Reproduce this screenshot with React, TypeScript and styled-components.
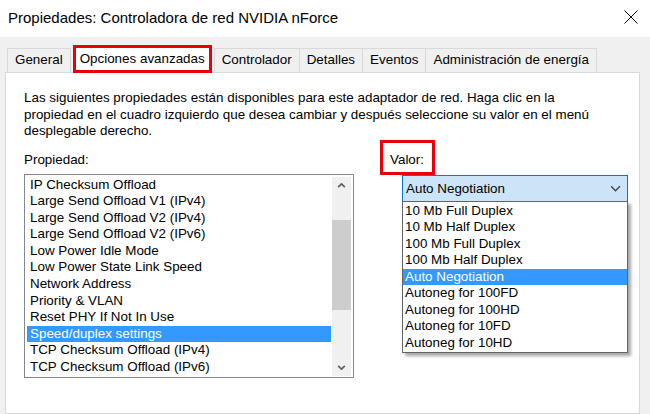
import React from 'react';
import styled, { createGlobalStyle } from 'styled-components';

const Global = createGlobalStyle`
  html, body { margin: 0; padding: 0; background: #f0f0f0; }
  body {
    font-family: "Liberation Sans", Arial, sans-serif;
    font-size: 13.4px;
    color: #000;
  }
  * { box-sizing: border-box; }
`;

const Window = styled.div`
  width: 650px;
  height: 414px;
  overflow: hidden;
  display: flex;
  flex-direction: column;
  background: #f0f0f0;
`;

const TitleBar = styled.div`
  height: 37px;
  flex-shrink: 0;
  background: #fff;
  display: flex;
  align-items: center;
  justify-content: space-between;
  padding: 0 12px 3px 8px;
`;

const Title = styled.div`
  font-size: 15px;
  color: #000;
`;

const CloseButton = styled.div`
  width: 14px;
  height: 14px;
  display: flex;
  align-items: center;
  justify-content: center;
`;

const Body = styled.div`
  flex: 1;
  display: flex;
  flex-direction: column;
  padding: 8px 10px 0 5px;
`;

const TabStrip = styled.div`
  display: flex;
  align-items: flex-end;
  height: 27px;
  padding-left: 2px;
  position: relative;
  z-index: 1;
`;

const Tab = styled.div<{ $active?: boolean }>`
  height: ${p => (p.$active ? '28px' : '24px')};
  margin: ${p => (p.$active ? '0 3px -1px 2px' : '0 0 0 -1px')};
  padding: ${p => (p.$active ? '3px 4px 0' : '3px 7px 0')};
  background: ${p => (p.$active ? '#fff' : '#f0f0f0')};
  border: ${p => (p.$active ? '3px solid #e8000b' : '1px solid #d9d9d9')};
  border-bottom: ${p => (p.$active ? '3px solid #e8000b' : 'none')};
  white-space: nowrap;
  line-height: 16px;
  &:first-child { margin-left: 0; }
`;

const Panel = styled.div`
  flex: 1;
  background: #fff;
  border: 1px solid #d9d9d9;
  padding: 17px 0 0 18px;
`;

const Description = styled.p`
  margin: 0;
  line-height: 16.5px;
  white-space: nowrap;
`;

const Columns = styled.div`
  display: flex;
  gap: 26px;
  align-items: flex-start;
`;

const LeftColumn = styled.div`
  width: 330px;
  flex-shrink: 0;
  display: flex;
  flex-direction: column;
`;

const FieldLabel = styled.div`
  line-height: 16.5px;
  margin: 12.5px 0 5px;
`;

const ListBox = styled.div`
  height: 204px;
  border: 1px solid #828790;
  padding: 2px 2px 1px;
  display: flex;
  background: #fff;
`;

const Items = styled.div`
  flex: 1;
  display: flex;
  flex-direction: column;
  overflow: hidden;
`;

const Item = styled.div<{ $selected?: boolean }>`
  flex-shrink: 0;
  height: 16.6px;
  line-height: 16.6px;
  padding-left: 3px;
  white-space: nowrap;
  background: ${p => (p.$selected ? '#3399ff' : 'transparent')};
  color: ${p => (p.$selected ? '#fff' : '#000')};
`;

const ScrollBar = styled.div`
  width: 19px;
  margin-left: 1px;
  background: #f0f0f0;
  display: flex;
  flex-direction: column;
`;

const ScrollArrow = styled.div`
  height: 17px;
  display: flex;
  align-items: center;
  justify-content: center;
`;

const ScrollTrack = styled.div`
  flex: 1;
  padding-top: 26px;
`;

const Thumb = styled.div`
  height: 90px;
  background: #cdcdcd;
`;

const RightColumn = styled.div`
  flex-shrink: 0;
  display: flex;
  flex-direction: column;
  align-items: flex-start;
`;

const ValorBox = styled.div`
  width: 55px;
  height: 35px;
  border: 3px solid #e8000b;
  padding: 9.5px 0 0 7px;
  line-height: 16.5px;
`;

const ComboWrap = styled.div`
  position: relative;
  margin-left: 22px;
`;

const Combo = styled.div`
  width: 226px;
  height: 27px;
  background: #cce4f7;
  border: 1px solid #0078d7;
  display: flex;
  align-items: center;
  justify-content: space-between;
  padding: 0 6px 0 3px;
`;

const DropList = styled.div`
  position: absolute;
  left: 0;
  top: 26px;
  width: 226px;
  background: #fff;
  border: 1px solid #646464;
  padding: 1px 0 1px;
  box-shadow: 3px 3px 3px rgba(0, 0, 0, 0.35);
  z-index: 2;
`;

const DropItem = styled.div<{ $selected?: boolean }>`
  height: 16.5px;
  line-height: 16.5px;
  padding-left: 2px;
  white-space: nowrap;
  background: ${p => (p.$selected ? '#3399ff' : 'transparent')};
  color: ${p => (p.$selected ? '#fff' : '#000')};
`;

const Chevron = ({ up, w = 9, color = '#606060', sw = 2 }: { up?: boolean; w?: number; color?: string; sw?: number }) => (
  <svg width={w} height={Math.round(w * 0.6)} viewBox="0 0 10 6">
    <polyline
      points={up ? '1,5 5,1 9,5' : '1,1 5,5 9,1'}
      fill="none"
      stroke={color}
      strokeWidth={sw}
    />
  </svg>
);

const properties = [
  'IP Checksum Offload',
  'Large Send Offload V1 (IPv4)',
  'Large Send Offload V2 (IPv4)',
  'Large Send Offload V2 (IPv6)',
  'Low Power Idle Mode',
  'Low Power State Link Speed',
  'Network Address',
  'Priority & VLAN',
  'Reset PHY If Not In Use',
  'Speed/duplex settings',
  'TCP Checksum Offload (IPv4)',
  'TCP Checksum Offload (IPv6)',
];

const values = [
  '10 Mb Full Duplex',
  '10 Mb Half Duplex',
  '100 Mb Full Duplex',
  '100 Mb Half Duplex',
  'Auto Negotiation',
  'Autoneg for 100FD',
  'Autoneg for 100HD',
  'Autoneg for 10FD',
  'Autoneg for 10HD',
];

const tabs = ['General', 'Opciones avanzadas', 'Controlador', 'Detalles', 'Eventos', 'Administración de energía'];

export default function App() {
  return (
    <Window>
      <Global />
      <TitleBar>
        <Title>Propiedades: Controladora de red NVIDIA nForce</Title>
        <CloseButton>
          <svg width="14" height="14" viewBox="0 0 14 14">
            <path d="M0.5 0.5 L13.5 13.5 M13.5 0.5 L0.5 13.5" stroke="#000" strokeWidth="1" />
          </svg>
        </CloseButton>
      </TitleBar>
      <Body>
        <TabStrip>
          {tabs.map(t => (
            <Tab key={t} $active={t === 'Opciones avanzadas'}>
              {t}
            </Tab>
          ))}
        </TabStrip>
        <Panel>
          <Description>
            Las siguientes propiedades están disponibles para este adaptador de red. Haga clic en la
            <br />
            propiedad en el cuadro izquierdo que desea cambiar y después seleccione su valor en el menú
            <br />
            desplegable derecho.
          </Description>
          <Columns>
            <LeftColumn>
              <FieldLabel>Propiedad:</FieldLabel>
              <ListBox>
                <Items>
                  {properties.map(p => (
                    <Item key={p} $selected={p === 'Speed/duplex settings'}>
                      {p}
                    </Item>
                  ))}
                </Items>
                <ScrollBar>
                  <ScrollArrow>
                    <Chevron up />
                  </ScrollArrow>
                  <ScrollTrack>
                    <Thumb />
                  </ScrollTrack>
                  <ScrollArrow>
                    <Chevron />
                  </ScrollArrow>
                </ScrollBar>
              </ListBox>
            </LeftColumn>
            <RightColumn>
              <ValorBox>Valor:</ValorBox>
              <ComboWrap>
                <Combo>
                  <span>Auto Negotiation</span>
                  <Chevron w={11} color="#444" sw={1.3} />
                </Combo>
                <DropList>
                  {values.map(v => (
                    <DropItem key={v} $selected={v === 'Auto Negotiation'}>
                      {v}
                    </DropItem>
                  ))}
                </DropList>
              </ComboWrap>
            </RightColumn>
          </Columns>
        </Panel>
      </Body>
    </Window>
  );
}
